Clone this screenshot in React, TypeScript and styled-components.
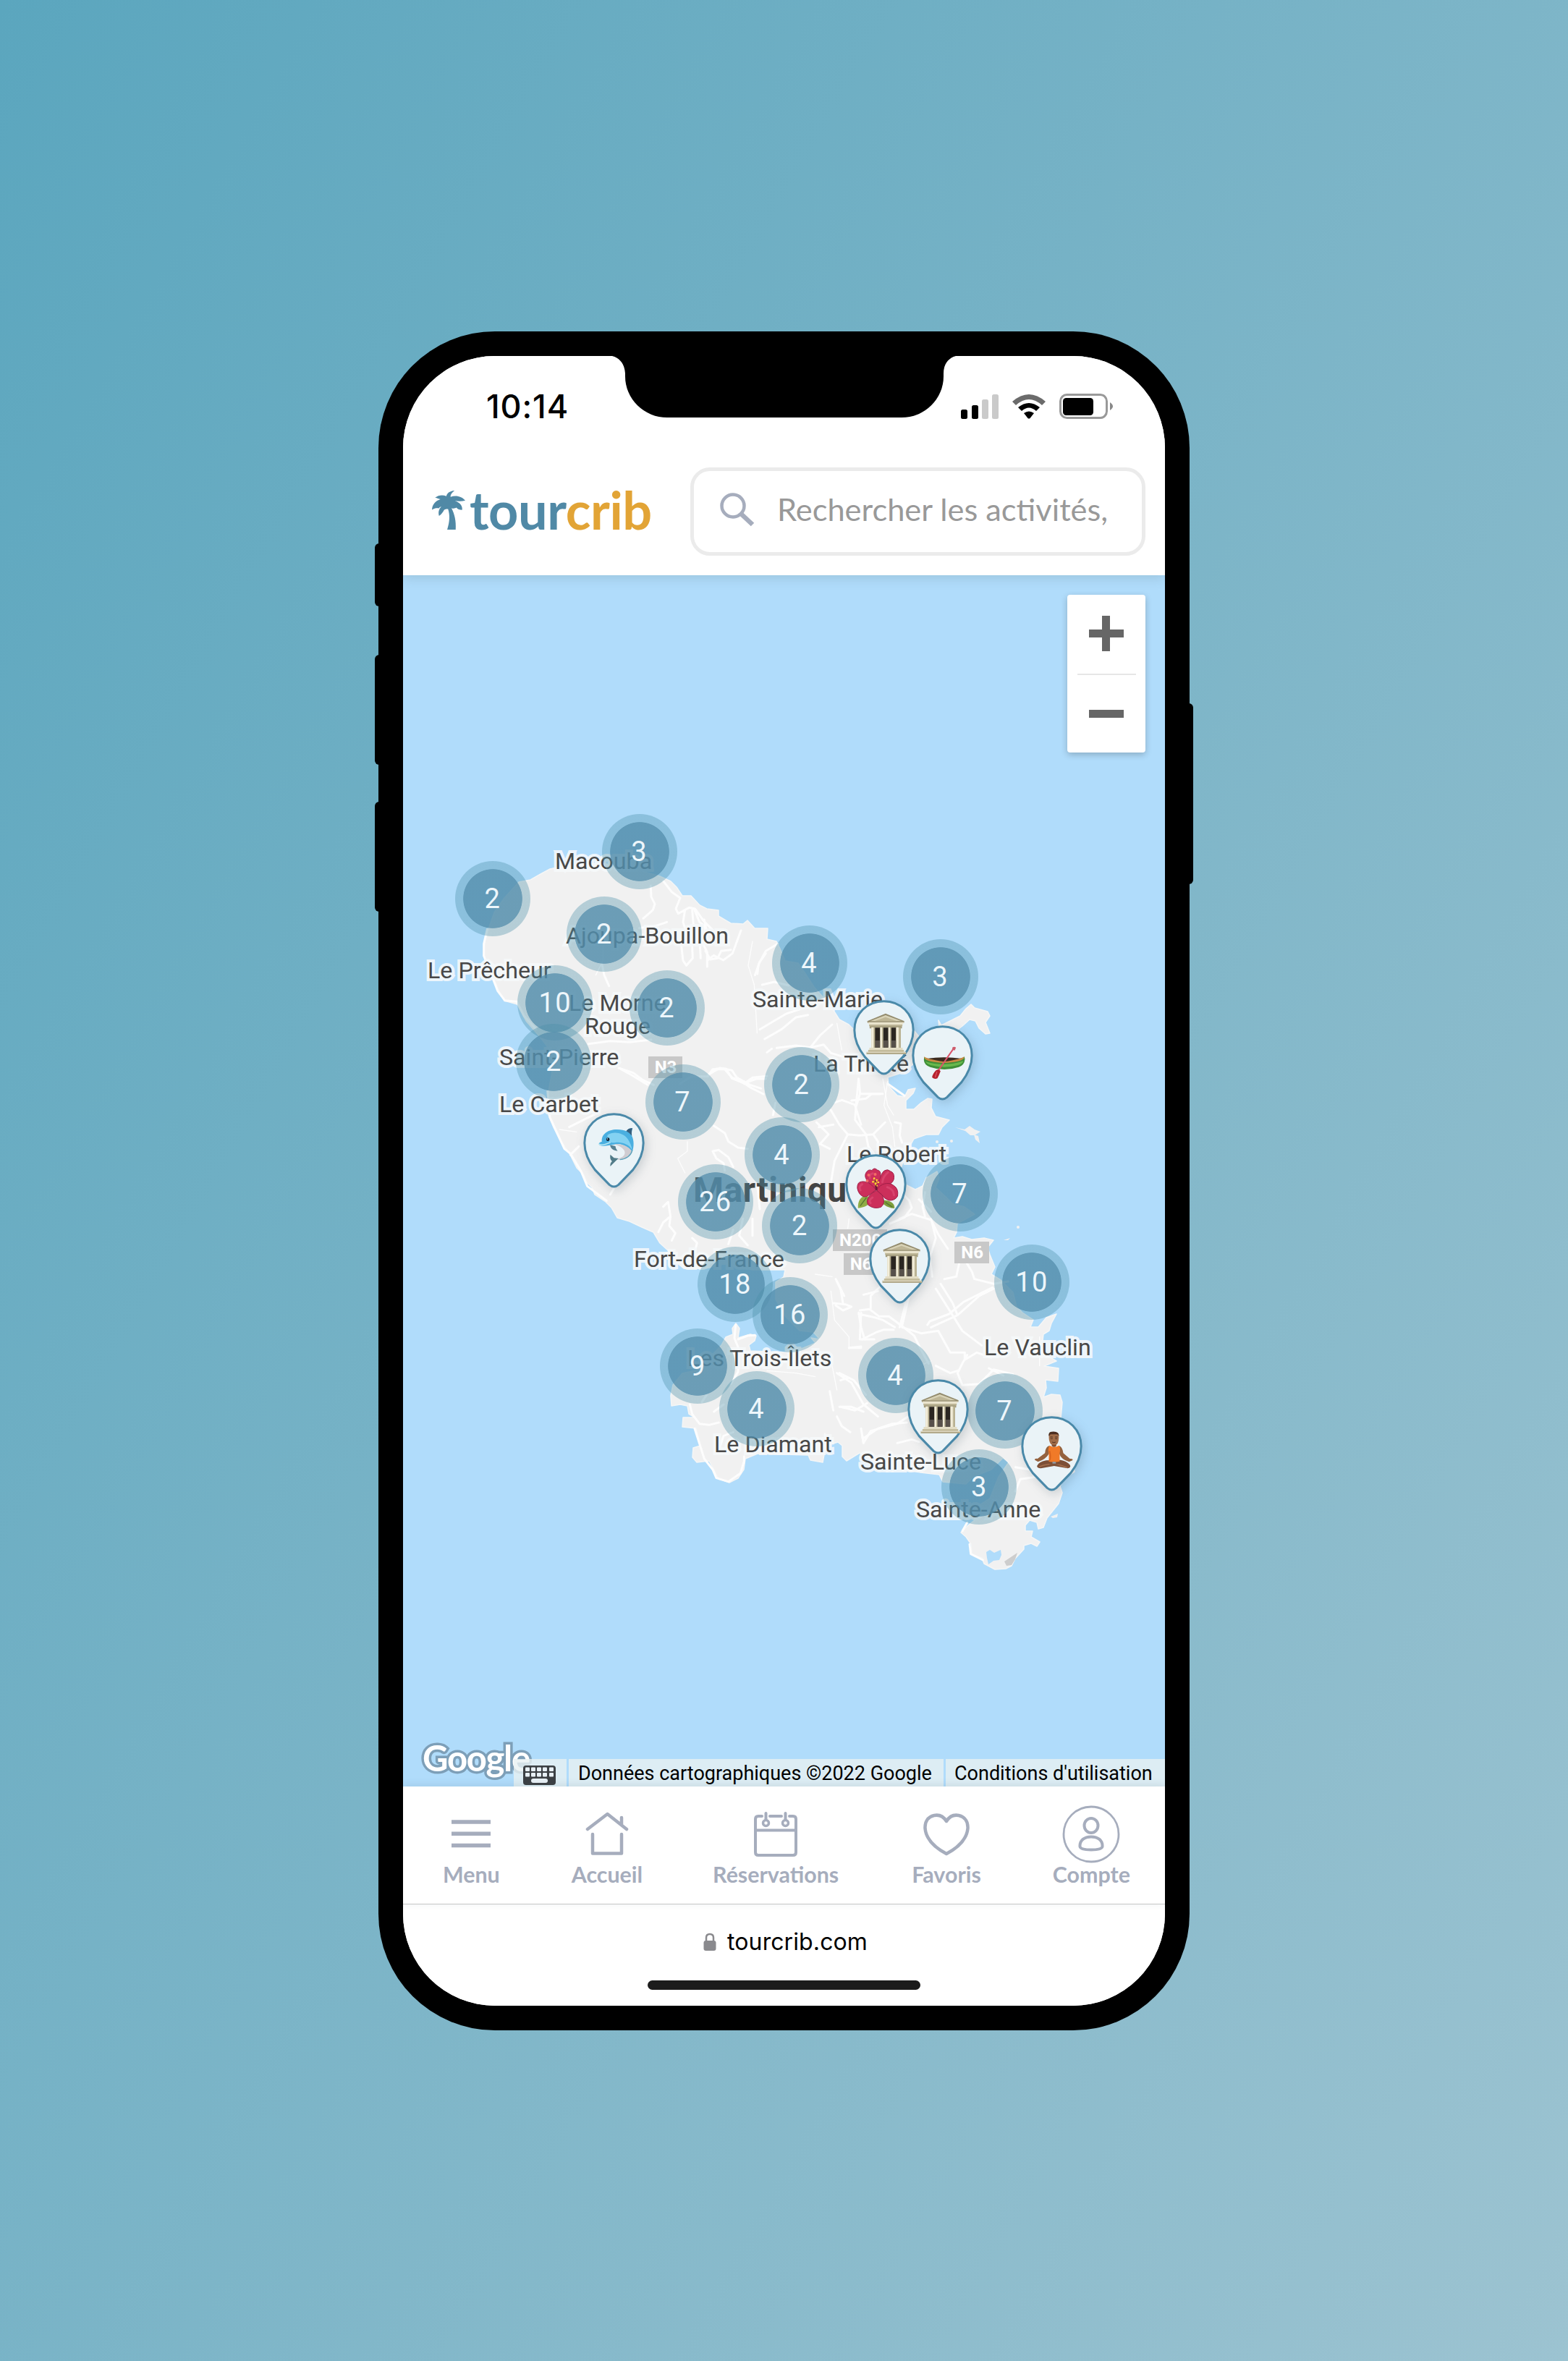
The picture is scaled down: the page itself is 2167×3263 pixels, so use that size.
import React from "react";
import styled, { createGlobalStyle } from "styled-components";

const GlobalStyle = createGlobalStyle`
  * { box-sizing: border-box; }
  html, body { margin: 0; padding: 0; }
  body { font-family: Roboto, "Liberation Sans", sans-serif; }
  svg { display: block; }
`;

const Stage = styled.main`
  width: 2167px;
  height: 3263px;
  display: flex;
  align-items: center;
  justify-content: center;
  background: linear-gradient(120deg, #5ba6be 0%, #9cc3d1 100%);
`;

const Phone = styled.div`
  position: relative;
  width: 1121px;
  height: 2348px;
  padding: 34px;
  border-radius: 161px;
  background: #000;
`;

const SideButton = styled.span<{ $side: "left" | "right"; $top: number; $height: number }>`
  position: absolute;
  ${(p) => p.$side}: -5px;
  top: ${(p) => p.$top}px;
  width: 20px;
  height: ${(p) => p.$height}px;
  border-radius: 6px;
  background: #000;
`;

const Screen = styled.div`
  position: relative;
  width: 1053px;
  height: 2280px;
  border-radius: 127px;
  overflow: hidden;
  display: flex;
  flex-direction: column;
  background: #fff;
`;

const Notch = styled.svg`
  position: absolute;
  left: 289px;
  top: -1px;
  z-index: 4;
`;

const StatusBar = styled.div`
  position: relative;
  z-index: 3;
  height: 140px;
  padding: 0 71px 0 115px;
  display: flex;
  align-items: center;
  justify-content: space-between;
  flex: none;
  background: #fff;
`;

const Clock = styled.time`
  font: 500 45px/50px Inter, sans-serif;
  letter-spacing: 0.9px;
  color: #000;
`;

const StatusIcons = styled.div`
  display: flex;
  align-items: center;
  gap: 19px;
`;

const Header = styled.header`
  position: relative;
  z-index: 2;
  height: 163px;
  flex: none;
  padding: 14px 27px 0 40px;
  display: flex;
  align-items: flex-start;
  justify-content: space-between;
  background: #fff;
  box-shadow: 0 3px 16px rgba(60, 90, 90, 0.2);
`;

const Logo = styled.div`
  display: flex;
  gap: 6px;
  margin-top: 22px;
`;

const Palm = styled.svg`
  margin-top: 10px;
`;

const Wordmark = styled.span`
  font: 700 72px/72px Lato, sans-serif;
  letter-spacing: -0.4px;
  color: #5089a6;
`;

const WordmarkAccent = styled.span`
  color: #e2a436;
`;

const SearchBox = styled.div`
  width: 629px;
  height: 122px;
  border: 5.5px solid #ebebeb;
  border-radius: 27px;
  padding: 0 0 5px 36px;
  display: flex;
  align-items: center;
  gap: 31px;
`;

const Placeholder = styled.span`
  margin-top: -3px;
  font: 400 43.4px/52px Lato, sans-serif;
  color: #999;
  white-space: nowrap;
`;

const MapCanvas = styled.section`
  position: relative;
  height: 1674px;
  flex: none;
  background: #b0dcfb;
  overflow: hidden;
`;

const Place = styled.span<{ $x: number; $y: number; $big?: boolean }>`
  position: absolute;
  left: ${(p) => p.$x - 557 - 2}px;
  top: ${(p) => p.$y - 794 - (p.$big ? 45 : 30.5)}px;
  font-size: ${(p) => (p.$big ? 48 : 32.2)}px;
  line-height: ${(p) => (p.$big ? 56 : 38)}px;
  font-weight: ${(p) => (p.$big ? 700 : 400)};
  letter-spacing: ${(p) => (p.$big ? "0.4px" : "0")};
  color: ${(p) => (p.$big ? "#444" : "#484848")};
  white-space: nowrap;
  -webkit-text-stroke: ${(p) => (p.$big ? "0" : "8px rgba(246, 249, 251, 0.9)")};
  paint-order: stroke fill;
`;

const Shield = styled.span<{ $x: number; $y: number; $w: number }>`
  position: absolute;
  left: ${(p) => p.$x - 557}px;
  top: ${(p) => p.$y - 794}px;
  width: ${(p) => p.$w}px;
  height: 30px;
  padding-left: 9px;
  background: #c8c8c8;
  color: #fff;
  font-size: 24px;
  line-height: 30px;
  font-weight: 700;
`;

const Cluster = styled.span<{ $x: number; $y: number }>`
  position: absolute;
  left: ${(p) => p.$x - 557 - 52}px;
  top: ${(p) => p.$y - 794 - 52}px;
  width: 104px;
  height: 104px;
  border-radius: 50%;
  display: flex;
  align-items: center;
  justify-content: center;
  background: radial-gradient(
    circle,
    rgba(82, 141, 171, 0.84) 40.4px,
    rgba(73, 142, 167, 0.36) 41.2px
  );
  color: #edf6fb;
  font-size: 38px;
  line-height: 40px;
  letter-spacing: 1.4px;
`;

const Pin = styled.svg<{ $x: number; $y: number }>`
  position: absolute;
  left: ${(p) => p.$x - 557 - 42.5}px;
  top: ${(p) => p.$y - 794}px;
  width: 85px;
  height: 104px;
  overflow: visible;
  filter: drop-shadow(3px 4px 7px rgba(60, 80, 95, 0.22));
`;

const ZoomControl = styled.div`
  position: absolute;
  right: 27px;
  top: 27px;
  width: 108px;
  height: 218px;
  padding: 0 13.5px;
  border-radius: 4px;
  background: #fff;
  box-shadow: 0 3px 10px rgba(0, 0, 0, 0.22);
  display: flex;
  flex-direction: column;
`;

const ZoomButton = styled.div<{ $lift: number }>`
  height: 109px;
  padding-bottom: ${(p) => p.$lift}px;
  display: flex;
  align-items: center;
  justify-content: center;
  & + & {
    border-top: 2px solid #e6e6e6;
  }
`;

const GoogleMark = styled.span`
  position: absolute;
  left: 27px;
  top: 1604px;
  font: 700 49px/60px Lato, sans-serif;
  letter-spacing: -1.3px;
  color: #fff;
  -webkit-text-stroke: 7px #7d9fb8;
  paint-order: stroke fill;
`;

const Attribution = styled.div`
  position: absolute;
  right: 0;
  bottom: 0;
  height: 38px;
  display: flex;
  gap: 3px;
`;

const AttributionCell = styled.span<{ $w: number; $pad: number }>`
  width: ${(p) => p.$w}px;
  padding-left: ${(p) => p.$pad}px;
  background: rgba(232, 241, 242, 0.8);
  color: #000;
  font-size: 27px;
  line-height: 40px;
  white-space: nowrap;
`;

const Nav = styled.nav`
  position: relative;
  z-index: 2;
  height: 163px;
  flex: none;
  padding: 24px 48px 0 55px;
  display: flex;
  justify-content: space-between;
  background: #fff;
  border-bottom: 1.5px solid #c6c6c6;
  box-shadow: 0 -2px 10px rgba(60, 80, 95, 0.12);
`;

const NavItem = styled.a<{ $shift?: number }>`
  display: flex;
  flex-direction: column;
  align-items: center;
  margin-left: ${(p) => -(p.$shift ?? 0)}px;
  margin-right: ${(p) => p.$shift ?? 0}px;
  color: #a6adbd;
`;

const NavIcon = styled.svg`
  width: 84px;
  height: 82px;
  margin: 0 -10px;
  fill: none;
  stroke: currentColor;
  stroke-width: 4.5;
  stroke-linecap: round;
  stroke-linejoin: round;
`;

const NavLabel = styled.span`
  font: 700 30.4px/30px Lato, sans-serif;
`;

const BrowserBar = styled.footer`
  flex: 1;
  padding-top: 32px;
  display: flex;
  flex-direction: column;
  align-items: center;
  background: #fff;
`;

const UrlRow = styled.div`
  height: 40px;
  display: flex;
  align-items: center;
  gap: 15px;
  padding-left: 4px;
`;

const Url = styled.span`
  font: 400 32px/40px Inter, sans-serif;
  letter-spacing: 0.1px;
  color: #000;
`;

const HomeIndicator = styled.span`
  width: 377px;
  height: 13px;
  margin-top: 33px;
  border-radius: 7px;
  background: #1c1c1c;
`;

const places: [string, number, number][] = [
  ["Macouba", 769, 1201],
  ["Ajoupa-Bouillon", 784, 1304],
  ["Le Prêcheur", 593, 1352],
  ["Le Morne", 788, 1397],
  ["Rouge", 810, 1429],
  ["Saint-Pierre", 692, 1472],
  ["Le Carbet", 692, 1537],
  ["Sainte-Marie", 1042, 1392],
  ["La Trinité", 1126, 1481],
  ["Le Robert", 1172, 1606],
  ["Fort-de-France", 878, 1751],
  ["Les Trois-Îlets", 952, 1888],
  ["Le Diamant", 989, 2007],
  ["Sainte-Luce", 1191, 2031],
  ["Sainte-Anne", 1268, 2097],
  ["Le Vauclin", 1362, 1873],
];

const clusters: [number, number, number][] = [
  [3, 883.7, 1176.7],
  [2, 681, 1241.7],
  [2, 835.3, 1290],
  [10, 767.3, 1385],
  [2, 921.7, 1392.7],
  [2, 765.3, 1466],
  [4, 1118.7, 1330.7],
  [3, 1299.7, 1349.3],
  [2, 1108, 1498],
  [7, 943.7, 1522.7],
  [4, 1080.7, 1595.7],
  [26, 988.7, 1660.3],
  [2, 1105.3, 1693],
  [18, 1016, 1774],
  [16, 1092, 1816.7],
  [7, 1326.7, 1649.7],
  [10, 1426, 1771],
  [9, 964.3, 1887.3],
  [4, 1045.7, 1946.7],
  [4, 1237.7, 1900.7],
  [7, 1388.7, 1949.3],
  [3, 1353.3, 2054.3],
];

const island =
  "M717 1218L733 1215L747 1207L760 1200L790 1194L830 1192L870 1198L912 1210L927 1217L935 1225L943 1237L955 1237L967 1250L977 1255L993 1257L993 1265L1010 1275L1027 1276L1033 1271L1043 1282L1061 1282L1060 1297L1073 1300L1078 1310L1085 1327L1103 1330L1112 1343L1125 1363L1140 1380L1153 1397L1160 1408L1173 1415L1190 1432L1225 1448L1250 1440L1263 1423L1272 1434L1290 1425L1298 1420L1297 1409L1301 1416L1313 1410L1327 1403L1335 1393L1342 1387L1347 1392L1365 1397L1368 1403L1362 1412L1368 1427L1362 1428L1353 1420L1348 1410L1340 1408L1330 1417L1300 1440L1275 1455L1262 1470L1245 1482L1227 1488L1228 1500L1240 1513L1250 1515L1255 1505L1265 1503L1262 1510L1252 1520L1252 1532L1263 1532L1273 1523L1282 1517L1288 1518L1287 1530L1293 1542L1312 1547L1302 1557L1297 1567L1280 1567L1263 1573L1258 1582L1262 1590L1250 1598L1243 1620L1253 1637L1265 1643L1275 1638L1280 1627L1295 1618L1298 1627L1293 1640L1307 1653L1317 1663L1333 1667L1347 1677L1323 1690L1322 1702L1318 1710L1330 1708L1343 1712L1360 1710L1373 1713L1365 1723L1368 1733L1375 1750L1370 1760L1383 1768L1400 1785L1405 1805L1413 1813L1428 1823L1424 1833L1435 1833L1446 1820L1460 1815L1453 1828L1450 1838L1442 1843L1440 1860L1450 1874L1460 1880L1443 1887L1463 1890L1462 1908L1445 1906L1446 1917L1442 1930L1453 1926L1465 1927L1468 1937L1466 1960L1478 2000L1485 2033L1470 2043L1465 2053L1468 2062L1463 2077L1455 2087L1447 2097L1442 2110L1435 2112L1433 2103L1423 2100L1417 2107L1417 2115L1427 2115L1425 2123L1437 2130L1433 2136L1425 2132L1415 2135L1415 2140L1403 2153L1398 2163L1390 2167L1375 2168L1360 2160L1357 2152L1343 2147L1342 2133L1335 2123L1328 2117L1338 2107L1347 2100L1346 2084L1368 2070L1380 2040L1394 2020L1386 2014L1370 2030L1345 2040L1335 2050L1303 2047L1298 2037L1240 2030L1200 2014L1188 2007L1170 2018L1164 2012L1164 1997L1158 1992L1148 1995L1140 2004L1137 2020L1120 2017L1117 2010L1047 2008L1030 2015L1028 2030L1020 2042L1008 2048L993 2043L985 2027L980 2018L963 2020L957 2013L958 2000L968 1997L962 1973L943 1971L944 1958L960 1958L952 1953L950 1942L940 1940L928 1942L927 1928L930 1913L943 1897L962 1893L983 1873L997 1858L1003 1847L1013 1843L1012 1835L1017 1828L1022 1835L1020 1848L1037 1843L1045 1845L1043 1852L1035 1858L1037 1866L1085 1868L1110 1862L1120 1858L1127 1855L1121 1848L1133 1850L1124 1840L1105 1838L1085 1818L1072 1795L1072 1771L1083 1764L1085 1754L1040 1754L1000 1746L975 1752L945 1752L930 1740L923 1727L912 1717L903 1702L887 1695L870 1687L853 1682L845 1668L837 1660L822 1650L818 1640L810 1632L807 1623L797 1613L787 1593L773 1573L765 1557L758 1540L757 1513L763 1480L756 1445L747 1433L727 1410L715 1387L697 1382L690 1370L683 1353L675 1333L668 1320L670 1300L675 1283L683 1260L697 1240Z";

const IslandArt = () => (
  <svg width="1053" height="1674" viewBox="557 794 1053 1674">
    <path d={island} fill="#f1f1f1" stroke="#f5f6f6" strokeWidth="1.5" strokeLinejoin="round" />
    <g fill="#f1f1f1">
      <path d="M1320 1557L1333 1560L1340 1555L1347 1560L1355 1563L1347 1568L1341 1568L1334 1562Z" />
      <path d="M1346 1567L1352 1569L1354 1579L1348 1574Z" />
      <circle cx="1295" cy="1577" r="2" />
      <circle cx="1315" cy="1576" r="2" />
      <circle cx="1407" cy="1695" r="2" />
      <path d="M1387 1713L1396 1710L1393 1713Z" />
      <path d="M1452 2095L1462 2091L1461 2096L1455 2097Z" />
    </g>
    <path d="M1363 2144L1368 2141L1374 2145L1383 2141L1384 2148L1381 2155L1373 2156L1366 2161L1364 2152Z" fill="#b0dcfb" />
    <path d="M1388 2157L1400 2149L1406 2145L1403 2154L1398 2162L1391 2163Z" fill="#cdcdcd" />
    <g fill="none" stroke="#fdfdfd" strokeLinejoin="round" strokeLinecap="round">
      <g transform="translate(560 1100) scale(.33333)" strokeWidth="9">
        <path d="M1018 370l2 45 15 30-8 25-40 35M1070 350l35 45 35 25-18 45 10 20 45-25 25 5 35 50 45 45M1160 470l-8 50 22 70-30 20 8 70 14 20 26-30-2-45M1190 470l5 60 25 50 5 90M1392 555l-35 95-38 28-40-20-25 20M1240 510l10 50-18 45 20 40 0 60M1085 520l-45 15-70 10M815 690l10 50 20 45M340 550l-14 60 0 50 32 80 25 65 30 40 50 5 30 60 50 55" />
        <path d="M1495 650l-25 35-20 55M760 1025l90-12 80 5 90-10M895 1130l45 25 65 40M1140 1190l45-30 70 0 20-30 50 0 30 35 60 20 40-15 40 0" />
        <path d="M820 590l0 90-30 60" strokeWidth="4" />
      </g>
      <g transform="translate(960 1180) scale(.33333)" strokeWidth="9">
        <path d="M345 370l-50 30-30 55-5 40M270 725l50-30 60-35 60-20M290 765l70-40 60-50 50-10M570 705l-50 45-40 50 55-12 30 35 50 15 40 10M480 800l-60-8-80 10M300 820l20-15M0 230l20 50 20 15 10 45M60 910l30-22 40 0 25 40 50 20 30 20 50 25M45 400l20 35 30-5 15-30 40-5M280 540l50-12 60 15M205 950l35-25 60-6M680 930l6 60-15 50-60-22-30 10M690 992l80 0M325 1080l10-50M665 1040l25 80M870 1000l-70-50" />
        <path d="M240 360l-18 100 25 80 12 200M590 700l20 110M780 930l20 110 25 40" strokeWidth="4" />
      </g>
      <g transform="translate(640 1450) scale(.33333)" strokeWidth="9">
        <path d="M350 170l10 110 60 130 25 20 45 75 25 60 80 60M560 260l-60 30-60 30M480 400l-35 35M610 600l15-25M645 75l60 20 40 30 45 20M1020 100l45-25 50 10 20 30 55 30 45 15M1040 315l45 30 15 35 40 25 40 5M1035 420l25-5 40 30 20 40M1035 420l15 30 30 20 5 30M830 650l20-20 10 60-30 25-20 40M860 690l-5 40 25 30-15 30M950 780l20 20-10 40M1200 700l0 70M1160 700l-15 70 35 40M1120 745l-20 60M1220 560l10 100" />
        <path d="M930 380l0 40-40 30 30 60M400 330l70 10" strokeWidth="4" />
      </g>
      <g transform="translate(1040 1450) scale(.33333)" strokeWidth="9">
        <path d="M325 250l35 60 35 40-30 60-25 50-15 90M265 300l50 50-35 40 40 20M275 320l60-10M395 350l50 5 55-5 50-50M470 350l-45-60 5-70 10-100M410 210l60-8 25-20 45 0M500 350l20 30 0 55M590 300l25 5-5 50 10 30M470 350l10 50 30 40M610 700l50-20 80 25 30 60 40 60M570 720l60-25 30-40-10-30-40-40M690 620l50 50M740 700l20 80-25 80 10 80M715 590l-10 60 10 40" />
        <path d="M880 870l30 50 10 30 80 20 60-10M860 870l-15 70-50 10M1000 990l-60 30-90 80-20-50-50-80M850 1100l-110 50M345 950l20 40 10 60M335 1050l50 5 25 10-35 15-30-20M440 1090l10 60 15 50M440 1095l70 15 30 10 50 30M610 1150l25-100M490 1070l0-50 40-40" />
        <path d="M400 700l-5 40M560 130l-15 100 35 90 10 80M260 930l70 10" strokeWidth="4" />
      </g>
      <g transform="translate(860 1740) scale(.33333)" strokeWidth="9">
        <path d="M470 270l-5 55 20 50-5 90-30 50M480 330l40-15 30-2M280 600l10 40 30 40 40 5 40-10M300 700l40 125 35 45 15 35 50 15 50-35 15-50 0-20M420 600l-40 30M330 590l20-30M860 545l15 80M890 650l20 40 35 25M890 470l60 40 50 90 60 50M905 500l30-10M905 610l60 15 50-30M1000 740l60-40 60-20 60-5M995 330l60-30 30-10 40 0M940 365l50 0M1000 760l-5-30M890 90l30 60M1060 130l-60 15M400 790l20-60 40-15" />
        <path d="M600 460l120 10 80 15M865 130l15 120 60 70 0 50M840 720l0 80M890 540l-20-100" strokeWidth="4" />
      </g>
      <g transform="translate(1160 1780) scale(.33333)" strokeWidth="9">
        <path d="M90 100l-5 110 60 0M85 90l40-5 40 30 40 0 55 40 50 40 30 60 30 55M260 155l30-130M260 160l80 25 70-10 50 90 60 0 0 30 50-30 60 20M460 95l50 80 80 60M365 150l10-15 80-30 60-50 120-60M400 0l60 95M490 350l20-40 20-35M490 350l20 50 70-5 60-60 80 20M400 320l60 30 30-10M0 350l60 30 50 60M0 490l50 0 50 20M90 580l10 60 30-50 110-30 60-40M240 640l60-15 30 10M40 245l50-5M730 840l20-50 70-10 50 20M730 740l60 10 20 30M620 330l60 30M540 1060l5 40 50 25M530 970l-20 35" />
        <path d="M830 200l0 120M380 300l-50 20" strokeWidth="4" />
      </g>
    </g>
  </svg>
);

const Museum = () => (
  <g>
    <path d="M68 104H202V118H68Z" fill="#a39c7c" />
    <path d="M75 114H197V200H75Z" fill="#d9d3b8" />
    <path d="M90 115h21v82h-21zM124 115h21v82h-21zM157 115h20v82h-20z" fill="#2b2621" />
    <path d="M90 168h21v29h-21zM124 168h21v29h-21zM157 168h20v29h-20z" fill="#57504a" />
    <path d="M76 113h9v86h-9zM113 113h6v86h-6zM147 113h6v86h-6zM180 113h7v86h-7z" fill="#f3eeda" />
    <path d="M85 113h5v86h-5zM120 113h4v86h-4zM153 113h4v86h-4zM190 113h7v86h-7z" fill="#b5ad8d" />
    <path d="M58 88L134 56L212 88L210 96H60Z" fill="#938b6d" />
    <path d="M70 88L134 63L200 88Z" fill="#d8d2b6" />
    <path d="M88 88L134 71L182 88Z" fill="#beb696" />
    <path d="M60 92H211L204 102H66Z" fill="#eae4cd" />
    <path d="M66 102H204V109H66Z" fill="#bdb596" />
    <path d="M67 198H205V208H67Z" fill="#e3ddc5" />
    <path d="M62 207H210V216H62Z" fill="#c4bc9c" />
    <path d="M55 215H219V225H55Z" fill="#b1a98a" />
    <path d="M55 215H219V218H55Z" fill="#eee8d3" />
  </g>
);

const Canoe = () => (
  <g>
    <path d="M51 131Q54 140 134 143Q214 140 218 130L220 140Q218 165 195 173Q134 193 76 173Q51 165 50 144Z" fill="#3f8f38" />
    <path d="M56 150Q134 174 214 148Q210 160 190 166Q134 180 80 166Q60 160 56 150Z" fill="#68b84d" />
    <path d="M62 138Q134 128 206 138Q180 152 134 153Q88 152 62 138Z" fill="#3c2b20" />
    <path d="M51 129Q60 140 134 151Q208 140 217 129L216 137Q200 153 134 156Q68 153 53 138Z" fill="#c88a43" />
    <path d="M172 98L108 190" stroke="#d9536a" strokeWidth="6" strokeLinecap="round" />
    <path d="M168 92Q175 86 183 92L178 104L168 101Z" fill="#ce5c6c" />
    <path d="M100 187Q111 180 119 190Q113 208 106 220Q94 225 84 216Q86 202 100 187Z" fill="#b5222e" />
    <path d="M104 192L97 216" stroke="#dc5060" strokeWidth="4" />
  </g>
);

const Dolphin = () => (
  <g>
    <path d="M65 130C63 124 72 121 77 119C73 88 105 68 140 69C158 69 170 73 179 76C185 66 195 62 204 64C201 73 200 84 201 95C210 112 211 138 203 162C197 151 180 138 158 131C128 126 105 140 78 137C70 136 66 134 65 130Z" fill="#4aafe0" />
    <path d="M100 92C125 75 165 82 184 108C195 124 200 139 202 153C190 130 157 119 134 123C111 126 98 120 100 92Z" fill="#83d2f2" />
    <path d="M178 76C184 65 195 62 204 64C199 73 200 84 201 95C193 86 187 80 178 76Z" fill="#365e7c" />
    <path d="M128 130C162 126 193 142 203 162C196 182 176 194 148 195L141 191C161 187 173 178 172 163C169 147 151 138 128 130Z" fill="#cfccd1" />
    <path d="M203 155C197 178 178 191 152 194" fill="none" stroke="#5aa3bd" strokeWidth="4" />
    <path d="M65 130Q77 136 93 130L111 123" fill="none" stroke="#b8e6f2" strokeWidth="5" strokeLinecap="round" />
    <path d="M111 133C112 147 123 157 142 158Q133 148 133 138Z" fill="#598393" />
    <path d="M112 173L127 187L146 189C130 203 120 214 112 222Q110 209 119 201Q108 190 112 173Z" fill="#517b88" />
    <circle cx="102" cy="110" r="7" fill="#132436" />
    <circle cx="100" cy="108" r="2" fill="#dff5ff" />
  </g>
);

const Hibiscus = () => (
  <g>
    <path d="M91 170C66 174 51 191 53 224C80 221 97 213 104 195Z" fill="#8fad47" />
    <path d="M159 191C182 190 207 202 204 225C184 224 169 218 155 204Z" fill="#7e9e3c" />
    <path d="M88 180L62 215M166 200L196 220" stroke="#567832" strokeWidth="4" />
    <g fill="#cc2f5b" stroke="#9f1f48" strokeWidth="3">
      <path d="M127 147C97 120 73 98 87 76Q97 61 110 68Q120 53 133 66Q149 69 146 91Q146 119 127 147Z" />
      <path d="M130 146C142 109 149 75 164 68Q176 61 187 71Q204 77 202 98C202 121 173 134 130 146Z" />
      <path d="M127 149C108 118 73 105 55 120Q43 139 59 164Q79 188 101 168Z" />
      <path d="M130 149C146 122 179 113 200 130Q222 143 217 174Q207 193 182 192Q163 187 153 170Z" />
      <path d="M130 151C101 164 82 190 95 211Q119 230 148 220Q169 203 153 170Z" />
    </g>
    <path d="M114 80q-15 2-12 20M177 76q-20 15-23 40M70 125q-17 10-7 25M174 137q27 9 28 33M113 180q-19 12-8 23" fill="none" stroke="#e0527a" strokeWidth="9" strokeLinecap="round" opacity=".6" />
    <path d="M130 149L123 107" stroke="#6a1835" strokeWidth="8" />
    <path d="M118 102l7 28M133 105l-8 25" stroke="#f1b632" strokeWidth="5" strokeDasharray="4 4" />
    <g fill="#ffd537">
      <circle cx="120" cy="101" r="4" />
      <circle cx="130" cy="108" r="4" />
      <circle cx="115" cy="115" r="4" />
      <circle cx="137" cy="117" r="4" />
      <circle cx="126" cy="122" r="4" />
      <circle cx="132" cy="131" r="3" />
    </g>
    <g fill="#f36d66">
      <circle cx="97" cy="87" r="6" />
      <circle cx="124" cy="84" r="6" />
      <circle cx="91" cy="111" r="6" />
    </g>
  </g>
);

const Yogi = () => (
  <g>
    <path d="M117 123Q100 128 99 154L68 177Q55 175 57 182L70 190Q101 181 116 156ZM157 123Q172 128 175 154L202 177Q217 176 213 184L199 190Q167 181 158 156Z" fill="#94623f" />
    <path d="M104 184Q72 190 66 207Q65 216 82 217L137 207L193 217Q208 214 203 203Q190 187 163 182Z" fill="#7d4f36" />
    <path d="M78 209Q110 197 145 198L190 213" fill="none" stroke="#a56e4b" strokeWidth="5" strokeLinecap="round" />
    <path d="M115 191Q137 181 162 191L158 200H118Z" fill="#7d4f36" />
    <path d="M118 122Q130 129 137 128Q149 128 157 122Q165 133 160 154V188Q139 194 115 189V155Q110 134 118 122Z" fill="#f07a28" />
    <path d="M118 145Q125 171 118 185" fill="none" stroke="#d7631d" strokeWidth="5" />
    <path d="M127 108H146V124Q137 133 127 124Z" fill="#7f4f34" />
    <path d="M116 76Q117 67 136 67Q155 67 156 78Q158 105 149 117Q136 124 123 116Q113 105 116 76Z" fill="#a06c48" />
    <path d="M115 84Q112 66 126 65Q158 61 157 84L151 76H122Z" fill="#4c2e20" />
    <path d="M121 87h10M141 87h10M122 93q5 3 9 0M141 93q5 3 9 0M129 108q7 5 14 0" fill="none" stroke="#4c2e20" strokeWidth="3" />
    <path d="M130 190h14v7h-14z" fill="#8e9daa" />
  </g>
);

const MapPin = ({ x, y, children }: { x: number; y: number; children: React.ReactNode }) => (
  <Pin $x={x} $y={y} viewBox="0 0 254 312">
    <path
      d="M127 5C57 5 5 58 5 125C5 168 22 202 48 236L108 298Q127 314 146 298L206 236C232 202 249 168 249 125C249 58 197 5 127 5Z"
      fill="#eaf3f7"
      stroke="#4a89a9"
      strokeWidth="9"
    />
    {children}
  </Pin>
);

const App = () => (
  <>
    <GlobalStyle />
    <Stage>
      <Phone>
        <SideButton $side="left" $top={293} $height={87} />
        <SideButton $side="left" $top={447} $height={152} />
        <SideButton $side="left" $top={650} $height={152} />
        <SideButton $side="right" $top={514} $height={250} />
        <Screen>
          <Notch width="475" height="87" viewBox="0 0 475 87">
            <path d="M0 0H475V1C464 4 458 13 458 25V29A58 57 0 0 1 400 86H76A58 57 0 0 1 18 29V25C17 12 11 4 0 1Z" fill="#000" />
          </Notch>
          <StatusBar>
            <Clock>10:14</Clock>
            <StatusIcons>
              <svg width="52" height="34" viewBox="0 0 52 34">
                <rect x="0" y="21" width="9" height="13" rx="2.5" />
                <rect x="15" y="15" width="9" height="19" rx="2.5" />
                <rect x="29" y="7" width="9" height="27" rx="2.5" fill="#cacaca" />
                <rect x="43" y="0" width="9" height="34" rx="2.5" fill="#cacaca" />
              </svg>
              <svg width="46" height="34" viewBox="0 0 46 34">
                <path d="M0 10Q23-10 46 10L41 15Q23-1 5 15Z" fill="#6b6b6b" />
                <path d="M8 18Q23 6 38 18L33 23Q23 14 13 23Z" />
                <path d="M16 26Q23 21 30 26L24.500 33Q23 34 21.500 33Z" />
              </svg>
              <svg width="75" height="35" viewBox="0 0 75 35">
                <rect x="1.500" y="1.500" width="64" height="32" rx="9" fill="none" stroke="#999" strokeWidth="3" />
                <rect x="5" y="6" width="42" height="24" rx="4.500" />
                <path d="M70 12Q78 17.500 70 23Z" fill="#888" />
              </svg>
            </StatusIcons>
          </StatusBar>
          <Header>
            <Logo>
              <Palm width="46" height="54" viewBox="0 0 118 161" preserveAspectRatio="none" fill="#5089a6">
                <path d="M80 0C62 2 53 11 51 23C37 16 22 19 11 29C19 31 24 34 30 36C13 42 1 57 0 79C9 73 15 72 26 73C25 68 29 67 33 66C23 78 22 91 25 104C33 99 37 91 41 84C43 77 48 76 57 76C64 101 63 127 54 161H84C86 124 80 96 69 72C76 75 82 73 87 70C90 77 98 79 107 80C109 62 98 50 81 42C92 44 104 45 118 41C107 24 84 17 66 26C65 16 72 8 80 0Z" />
              </Palm>
              <Wordmark>
                tour<WordmarkAccent>crib</WordmarkAccent>
              </Wordmark>
            </Logo>
            <SearchBox>
              <svg width="48" height="47" viewBox="0 0 48 47" fill="none" stroke="#a6adbd">
                <circle cx="18" cy="18" r="15.500" strokeWidth="4.500" />
                <path d="M29 29L45 44" strokeWidth="6.500" />
              </svg>
              <Placeholder>Rechercher les activités,</Placeholder>
            </SearchBox>
          </Header>
          <MapCanvas>
            <IslandArt />
            <Shield $x={895.7} $y={1459} $w={47}>N3</Shield>
            <Shield $x={1151} $y={1698} $w={75}>N200</Shield>
            <Shield $x={1165.7} $y={1731} $w={48}>N6</Shield>
            <Shield $x={1319.3} $y={1715.5} $w={47.5}>N6</Shield>
            {places.map(([name, x, y]) => (
              <Place key={name} $x={x} $y={y}>{name}</Place>
            ))}
            <Place $x={960} $y={1661} $big>Martinique</Place>
            {clusters.map(([count, x, y]) => (
              <Cluster key={`${x}-${y}`} $x={x} $y={y}>{count}</Cluster>
            ))}
            <MapPin x={1221} y={1381}><Museum /></MapPin>
            <MapPin x={1302} y={1416}><Canoe /></MapPin>
            <MapPin x={848.7} y={1537}><Dolphin /></MapPin>
            <MapPin x={1210.7} y={1594}><Hibiscus /></MapPin>
            <MapPin x={1243} y={1697}><Museum /></MapPin>
            <MapPin x={1296.7} y={1905}><Museum /></MapPin>
            <MapPin x={1453.3} y={1956}><Yogi /></MapPin>
            <ZoomControl>
              <ZoomButton $lift={1}>
                <svg width="48" height="49" viewBox="0 0 48 49" fill="#666">
                  <path d="M18 0h11v19h19v11H29v19H18V30H0V19h18z" />
                </svg>
              </ZoomButton>
              <ZoomButton $lift={0}>
                <svg width="48" height="11" viewBox="0 0 48 11" fill="#666">
                  <path d="M0 0h48v11H0z" />
                </svg>
              </ZoomButton>
            </ZoomControl>
            <GoogleMark>Google</GoogleMark>
            <Attribution>
              <AttributionCell $w={73} $pad={13}>
                <svg width="45" height="37" viewBox="0 -9 45 37">
                  <rect width="45" height="27" rx="4" fill="#3c4044" />
                  <g fill="#e8f0f5">
                    {[3, 11, 19, 27, 36].map((kx) => (
                      <React.Fragment key={kx}>
                        <rect x={kx} y="2.500" width="6" height="5.500" rx="1" />
                        <rect x={kx} y="10" width="6" height="5.500" rx="1" />
                      </React.Fragment>
                    ))}
                    <rect x="11" y="18" width="23" height="6" rx="3" />
                  </g>
                </svg>
              </AttributionCell>
              <AttributionCell $w={518} $pad={13}>Données cartographiques ©2022 Google</AttributionCell>
              <AttributionCell $w={303} $pad={12}>Conditions d'utilisation</AttributionCell>
            </Attribution>
          </MapCanvas>
          <Nav>
            <NavItem>
              <NavIcon viewBox="0 0 84 82">
                <path d="M15 25H69M15 41.300H69M15 57.500H69" strokeWidth="5.500" strokeLinecap="butt" />
              </NavIcon>
              <NavLabel>Menu</NavLabel>
            </NavItem>
            <NavItem>
              <NavIcon viewBox="0 0 84 82">
                <path d="M15 35L42.500 14L69 35M62 28V19M22 42V68.500H62V42" />
              </NavIcon>
              <NavLabel>Accueil</NavLabel>
            </NavItem>
            <NavItem $shift={2}>
              <NavIcon viewBox="0 0 84 82">
                <path d="M23 17H18Q14 17 14 21V67Q14 71 18 71H66Q70 71 70 67V21Q70 17 66 17H61M34 17H50M14 36.500H70M28.500 13V21M55.500 13V21" strokeWidth="4" />
                <circle cx="28.500" cy="26.500" r="4" strokeWidth="3.500" />
                <circle cx="55.500" cy="26.500" r="4" strokeWidth="3.500" />
              </NavIcon>
              <NavLabel>Réservations</NavLabel>
            </NavItem>
            <NavItem>
              <NavIcon viewBox="0 0 84 82">
                <path d="M42 24C37 16 30 15 25 16C16 18 12 25 12.500 34C14 49 25 60 42 69C59 60 70 49 71.500 34C72 25 68 18 59 16C54 15 47 16 42 24Z" />
              </NavIcon>
              <NavLabel>Favoris</NavLabel>
            </NavItem>
            <NavItem>
              <NavIcon viewBox="0 0 84 82">
                <circle cx="42" cy="42" r="38" strokeWidth="2.800" />
                <ellipse cx="42" cy="30" rx="9.500" ry="10" strokeWidth="4" />
                <path d="M26.500 59C26 50 33 45.500 42 45.500C51 45.500 58 50 57.500 59C57 62 51 63.500 42 63.500C33 63.500 27 62 26.500 59Z" strokeWidth="4" />
              </NavIcon>
              <NavLabel>Compte</NavLabel>
            </NavItem>
          </Nav>
          <BrowserBar>
            <UrlRow>
              <svg width="18" height="25" viewBox="0 0 18 25">
                <path d="M4 12V7Q4 2 9 2T14 7V12" fill="none" stroke="#8a8a8e" strokeWidth="2.500" />
                <rect x="0.500" y="11" width="17" height="14" rx="3" fill="#8a8a8e" />
              </svg>
              <Url>tourcrib.com</Url>
            </UrlRow>
            <HomeIndicator />
          </BrowserBar>
        </Screen>
      </Phone>
    </Stage>
  </>
);

export default App;
